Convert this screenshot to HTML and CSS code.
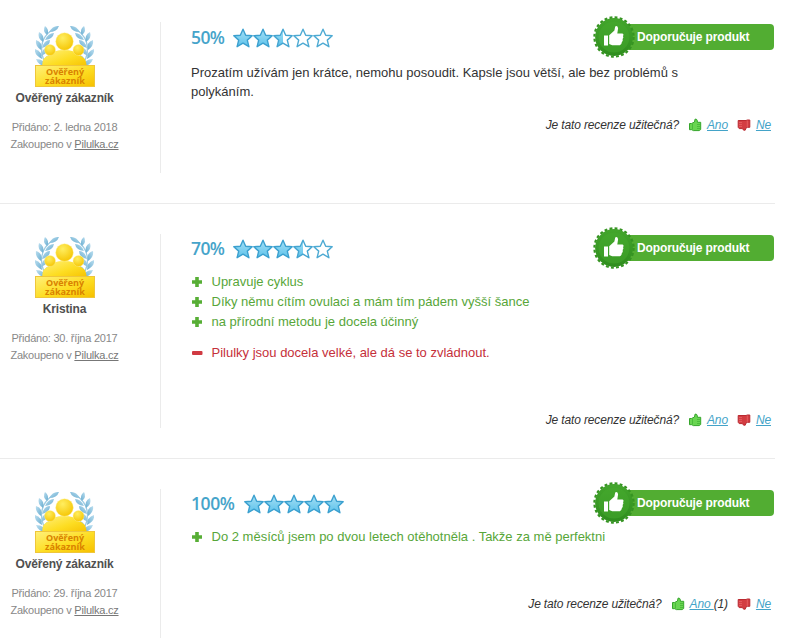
FILE: index.html
```html
<!DOCTYPE html>
<html lang="cs">
<head>
<meta charset="utf-8">
<title>Recenze</title>
<link rel="stylesheet" href="styles.css">
</head>
<body>
<svg class="defs" width="0" height="0" aria-hidden="true">
  <defs>
    <linearGradient id="starFill" x1="0" y1="0" x2="0" y2="1"><stop offset="0" stop-color="#a6e0f5"/><stop offset="1" stop-color="#5cc2eb"/></linearGradient>
    <linearGradient id="gold" x1="0" y1="0" x2="1" y2="1"><stop offset="0" stop-color="#fff07a"/><stop offset=".55" stop-color="#fddd22"/><stop offset="1" stop-color="#f6c000"/></linearGradient>
    <radialGradient id="head" cx=".4" cy=".3" r=".75"><stop offset="0" stop-color="#ffee60"/><stop offset="1" stop-color="#f5c400"/></radialGradient>
    <linearGradient id="seal" x1="0" y1="0" x2="0" y2="1"><stop offset="0" stop-color="#43a62c"/><stop offset="1" stop-color="#2f8d1e"/></linearGradient>
    <linearGradient id="leaf" x1="0" y1="0" x2="1" y2="1"><stop offset="0" stop-color="#bcdff0"/><stop offset="1" stop-color="#68acd0"/></linearGradient>
    <path id="starShape" d="M10 1.2 12.7 7.2 19.2 7.8 14.3 12.1 15.9 18.7 10 15.2 4.1 18.7 5.7 12.1 .8 7.8 7.3 7.2Z"/>
    <symbol id="star" viewBox="0 0 20 20"><use href="#starShape" fill="url(#starFill)" stroke="#3ba0cf" stroke-width="1.4" stroke-linejoin="round"/></symbol>
    <symbol id="star-empty" viewBox="0 0 20 20"><use href="#starShape" fill="#fff" stroke="#4daad3" stroke-width="1.4" stroke-linejoin="round"/></symbol>
    <symbol id="star-half" viewBox="0 0 20 20"><path d="M10 1.2V15.2L4.1 18.7 5.7 12.1 .8 7.8 7.3 7.2Z" fill="url(#starFill)"/><use href="#starShape" fill="none" stroke="#45a5d1" stroke-width="1.4" stroke-linejoin="round"/></symbol>
    <symbol id="plus" viewBox="0 0 12 12"><path d="M4.2 1h3.6v3.2H11v3.6H7.8V11H4.2V7.8H1V4.2h3.2Z" fill="#57ae35"/></symbol>
    <symbol id="minus" viewBox="0 0 12 12"><rect x="1" y="4" width="10.5" height="4" rx="1" fill="#d03a42"/></symbol>
    <symbol id="laurel" viewBox="0 0 28 48">
      <path d="M17 5C5 13 2 29 15 45" fill="none" stroke="#9ccbe2" stroke-width="1.3"/>
      <g fill="url(#leaf)">
        <path d="M14 7Q18 0 24 1 22 7 14 7Z"/><path d="M12 10Q7 6 10 1 15 5 12 10Z"/><path d="M10 15Q13 8 19 8 18 14 10 15Z"/>
        <path d="M8 17Q2 13 4 7 10 10 8 17Z"/><path d="M7 23Q9 15 15 15 15 21 7 23Z"/><path d="M6 25Q0 21 1 15 8 17 6 25Z"/>
        <path d="M6 31Q7 23 13 22 14 28 6 31Z"/><path d="M7 34Q-1 30 0 24 7 26 7 34Z"/><path d="M9 39Q8 32 14 30 16 36 9 39Z"/>
        <path d="M11 42Q3 40 1 34 10 34 11 42Z"/><path d="M15 47Q6 47 4 41 13 39 15 47Z"/>
      </g>
    </symbol>
    <symbol id="verified" viewBox="0 0 64 64">
      <use href="#laurel" x="2" y="1" width="28" height="48"/>
      <g transform="matrix(-1 0 0 1 61 1)"><use href="#laurel" width="28" height="48"/></g>
      <path d="M9 43Q9 32 17 31 20 26 31 26T45 31Q53 32 54 43Z" fill="url(#gold)"/>
      <circle cx="17" cy="26" r="5.5" fill="url(#head)" stroke="#fff3a0" stroke-width=".4"/>
      <circle cx="45.5" cy="26" r="5.5" fill="url(#head)" stroke="#fff3a0" stroke-width=".4"/>
      <circle cx="31.5" cy="17.5" r="8.8" fill="url(#head)" stroke="#fff3a0" stroke-width=".4"/>
      <rect x="2.5" y="41.5" width="59" height="21" fill="url(#gold)" stroke="#efc63a"/>
      <text class="ribbon-text" x="32" y="50.5" textLength="38" lengthAdjust="spacingAndGlyphs">Ověřený</text>
      <text class="ribbon-text" x="32" y="59.5" textLength="40" lengthAdjust="spacingAndGlyphs">zákazník</text>
    </symbol>
    <symbol id="recommend" viewBox="0 0 42 42">
      <circle cx="21" cy="21" r="18.9" fill="url(#seal)"/>
      <circle cx="21" cy="21" r="19.6" fill="none" stroke="#369422" stroke-width="2.2" stroke-dasharray="2.9 2.231"/>
      <circle cx="21" cy="21" r="15.5" fill="#46a92e" opacity=".5"/>
      <path d="M11 19.5h4v10h-4ZM16.2 19.3 21.4 14.5 22.2 10.4Q24.5 9.2 25.1 12.2L24.3 17.5H29.5Q31.3 18.3 30 20.3 31 21.5 29.6 23.1 30.3 25 28.8 26.2 28.6 29 26.8 29.2H19.2L16.2 28Z" fill="#fff"/>
    </symbol>
    <symbol id="yes" viewBox="0 0 14 14"><path d="M1.5 5.5h2L6.5 4 7 1.2Q9.5.6 9.4 4.3H12.7V11.5L11.2 12.6H5.3L3.8 11.7H1.5Z" fill="#69d551" stroke="#36a52c"/><path d="M4.5 6v5M9 6.5h3M9 8.5h3M9 10.5h3" stroke="#3fb132" stroke-width=".7"/></symbol>
    <symbol id="no" viewBox="0 0 14 14"><path d="M1.2 2.5H9L10.3 2H12.8V9.3H10.3L9 10 8.2 12.2Q5.9 12.8 5.7 10.6H2.2L1.2 9.3Z" fill="#d33d42" stroke="#b92930"/><path d="M10.3 2.5v6.5M2 4.6h3M2 6.6h3M2 8.6h3" stroke="#ee6a6e" stroke-width=".7"/></symbol>
  </defs>
</svg>
<main class="reviews">
  <article class="review review-first">
    <aside class="customer">
      <svg class="verified"><use href="#verified"/></svg>
      <strong class="name">Ověřený zákazník</strong>
      <p class="meta">Přidáno: 2. ledna 2018<br>Zakoupeno v <a href="#">Pilulka.cz</a></p>
    </aside>
    <section class="content">
      <header class="head">
        <span class="percent">50%</span>
        <span class="stars"><svg><use href="#star"/></svg><svg><use href="#star"/></svg><svg><use href="#star-half"/></svg><svg><use href="#star-empty"/></svg><svg><use href="#star-empty"/></svg></span>
        <div class="recommend"><svg><use href="#recommend"/></svg><span>Doporučuje produkt</span></div>
      </header>
      <p class="comment">Prozatím užívám jen krátce, nemohu posoudit. Kapsle jsou větší, ale bez problémů s<br>polykáním.</p>
      <footer class="helpful"><span>Je tato recenze užitečná?</span><svg><use href="#yes"/></svg><a href="#">Ano</a><svg><use href="#no"/></svg><a href="#">Ne</a></footer>
    </section>
  </article>
  <article class="review review-second">
    <aside class="customer">
      <svg class="verified"><use href="#verified"/></svg>
      <strong class="name">Kristina</strong>
      <p class="meta">Přidáno: 30. října 2017<br>Zakoupeno v <a href="#">Pilulka.cz</a></p>
    </aside>
    <section class="content">
      <header class="head">
        <span class="percent">70%</span>
        <span class="stars"><svg><use href="#star"/></svg><svg><use href="#star"/></svg><svg><use href="#star"/></svg><svg><use href="#star-half"/></svg><svg><use href="#star-empty"/></svg></span>
        <div class="recommend"><svg><use href="#recommend"/></svg><span>Doporučuje produkt</span></div>
      </header>
      <ul class="points pros">
        <li><svg><use href="#plus"/></svg><span>Upravuje cyklus</span></li>
        <li><svg><use href="#plus"/></svg><span>Díky němu cítím ovulaci a mám tím pádem vyšší šance</span></li>
        <li><svg><use href="#plus"/></svg><span>na přírodní metodu je docela účinný</span></li>
      </ul>
      <ul class="points cons">
        <li><svg><use href="#minus"/></svg><span>Pilulky jsou docela velké, ale dá se to zvládnout.</span></li>
      </ul>
      <footer class="helpful"><span>Je tato recenze užitečná?</span><svg><use href="#yes"/></svg><a href="#">Ano</a><svg><use href="#no"/></svg><a href="#">Ne</a></footer>
    </section>
  </article>
  <article class="review review-third">
    <aside class="customer">
      <svg class="verified"><use href="#verified"/></svg>
      <strong class="name">Ověřený zákazník</strong>
      <p class="meta">Přidáno: 29. října 2017<br>Zakoupeno v <a href="#">Pilulka.cz</a></p>
    </aside>
    <section class="content">
      <header class="head">
        <span class="percent percent-full">100%</span>
        <span class="stars"><svg><use href="#star"/></svg><svg><use href="#star"/></svg><svg><use href="#star"/></svg><svg><use href="#star"/></svg><svg><use href="#star"/></svg></span>
        <div class="recommend"><svg><use href="#recommend"/></svg><span>Doporučuje produkt</span></div>
      </header>
      <ul class="points pros">
        <li><svg><use href="#plus"/></svg><span>Do 2 měsíců jsem po dvou letech otěhotněla . Takže za mě perfektni</span></li>
      </ul>
      <footer class="helpful"><span>Je tato recenze užitečná?</span><svg><use href="#yes"/></svg><a href="#">Ano&nbsp;</a><span>(1)</span><svg><use href="#no"/></svg><a href="#">Ne</a></footer>
    </section>
  </article>
</main>
</body>
</html>
```

FILE: styles.css
```css
* { box-sizing: border-box; }
body {
  margin: 0;
  height: 640px;
  overflow: hidden;
  background: #fff;
  color: #333;
  font: 12px/20px "Liberation Sans", Arial, sans-serif;
}
p, ul { margin: 0; padding: 0; }
.defs { position: absolute; }
.reviews { width: 775px; }
.review {
  display: flex;
  padding: 30px 0;
  border-bottom: 1px solid #ebebeb;
}
.review-first { height: 204px; padding-top: 22px; }
.review-second { height: 255px; }
.review-third { height: 209px; border-bottom: 0; }
.customer {
  width: 161px;
  padding-right: 31px;
  border-right: 1px solid #ebebeb;
  display: flex;
  flex-direction: column;
  align-items: center;
}
.verified { width: 64px; height: 64px; margin-top: 1px; flex: none; }
.review-first .verified { margin-top: 2px; }
.ribbon-text {
  font: 700 9.5px "Open Sans", sans-serif;
  fill: #d98200;
  text-anchor: middle;
}
.name { color: #505050; letter-spacing: -0.17px; }
.meta {
  margin-top: 11px;
  font-size: 11px;
  line-height: 17px;
  letter-spacing: -0.23px;
  color: #888;
  text-align: center;
}
.meta a { color: #777; }
.content {
  flex: 1;
  display: flex;
  flex-direction: column;
  padding-left: 30px;
}
.head { display: flex; align-items: center; height: 30px; flex: none; }
.review-second .head, .review-third .head { height: 28px; }
.percent {
  width: 33px;
  color: #46a4ca;
  font: 600 17.5px/28px "Open Sans", sans-serif;
  letter-spacing: -0.6px;
}
.percent-full { width: 44px; letter-spacing: -0.4px; }
.stars { display: flex; margin: 1px 0 0 9px; }
.stars svg { width: 20px; height: 20px; }
.recommend {
  display: flex;
  align-items: center;
  width: 181px;
  height: 26px;
  margin-left: auto;
  margin-right: 1px;
  background: linear-gradient(90deg, transparent 20px, #52ad32 20px);
  border-radius: 4px;
  color: #fff;
  font-weight: 700;
  letter-spacing: -0.13px;
}
.recommend svg { width: 42px; height: 42px; margin-right: 2px; flex: none; }
.comment { margin-top: 11px; font-size: 13px; line-height: 19px; }
.points { list-style: none; font-size: 13px; }
.points li { display: flex; align-items: center; height: 20px; }
.points svg { width: 12px; height: 12px; margin-right: 8.5px; }
.pros { margin-top: 10px; color: #57a639; }
.cons { margin-top: 11px; color: #c5303a; }
.helpful {
  display: flex;
  align-items: center;
  justify-content: flex-end;
  height: 20px;
  margin-top: auto;
  padding-right: 4px;
  font-style: italic;
  letter-spacing: -0.14px;
}
.review-first .helpful { margin-bottom: 38px; }
.review-second .helpful { margin-bottom: -2px; }
.review-third .helpful { margin-bottom: 24px; }
.helpful svg { width: 14px; height: 14px; margin: 0 5px 0 9px; }
.helpful a { color: #43a3c8; }
```
